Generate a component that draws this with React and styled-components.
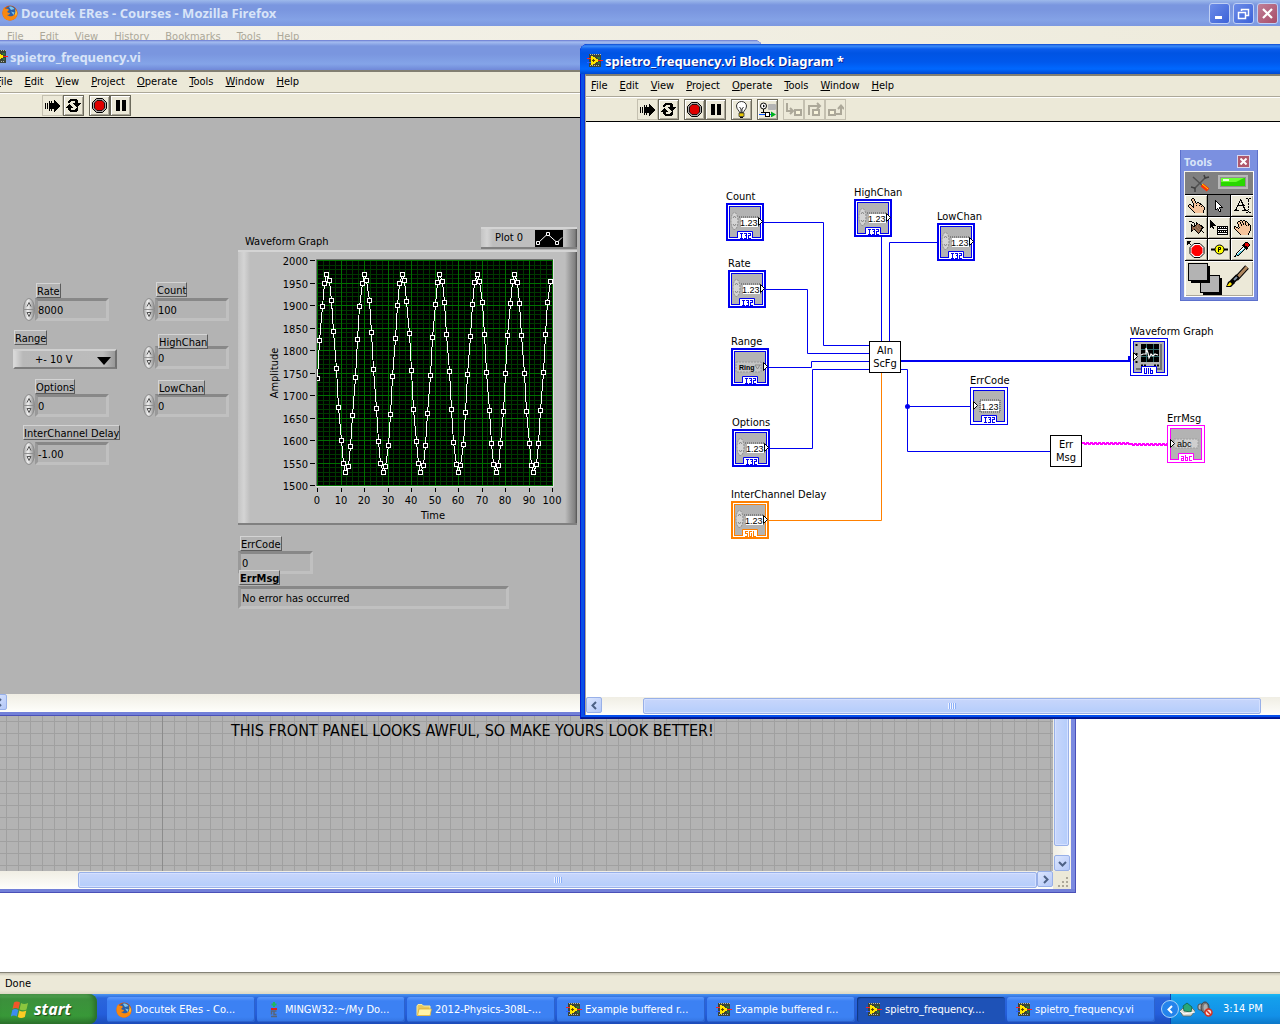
import React from "react";
import styled, { createGlobalStyle, css } from "styled-components";

const ui = '"DejaVu Sans Condensed", "Noto Sans", "Open Sans", sans-serif';
const caption = '"Noto Sans", "Open Sans", sans-serif';

const GlobalStyle = createGlobalStyle`
  * { box-sizing: border-box; }
  html, body { margin: 0; height: 100%; overflow: hidden; }
  body { font-family: ${ui}; font-size: 11px; line-height: 14px; color: #000; background: #fff; }
  button, input, select { font: inherit; color: inherit; margin: 0; padding: 0; border: 0; background: none; border-radius: 0; }
  svg { display: block; flex: none; }
`;

/* ---------- icons ---------- */

const inks = {
  "#": "#000", w: "#fff", s: "#f6c49c", g: "#808080", b: "#8a6048", y: "#ffff00",
  r: "#e00000", c: "#58c8d8", o: "#ff8000", d: "#555", k: "#a08060", l: "#c8c8c8",
};

function Pixels({ rows, ink }) {
  const cells = [];
  rows.forEach((row, y) => {
    let x = 0;
    while (x < row.length) {
      const ch = row[x];
      let n = 1;
      while (row[x + n] === ch) n += 1;
      if (ch !== ".") cells.push(<rect key={`${x}-${y}`} x={x} y={y} width={n} height="1" fill={ink || inks[ch]} />);
      x += n;
    }
  });
  return (
    <svg width={rows[0].length} height={rows.length} shapeRendering="crispEdges" aria-hidden="true">
      {cells}
    </svg>
  );
}

const runRows = [
  ".........#.....",
  "....#.#..##....",
  "....#.#..###...",
  "#.#.#########..",
  "#.#.##########.",
  "#.#.###########",
  "#.#.###########",
  "#.#.##########.",
  "#.#.#########..",
  "....#.#..###...",
  "....#.#..##....",
  ".........#.....",
];
const loopRows = [
  "....#######....",
  "...#########...",
  "..###....###...",
  "..##.....###...",
  ".......########",
  "...#....######.",
  "..###....####..",
  ".#####....##...",
  "#######....#...",
  "..###.....##...",
  "..###....###...",
  "...#########...",
  "....#######....",
];
const pointRows = [
  "....##...........",
  "...#ss#..........",
  "...#ss#..........",
  "....#ss#.........",
  "....#ss#.##......",
  ".....#ss#ss##....",
  ".##..#ssssss##...",
  "#ss#.#ss#ss#ss#..",
  "#sss##sssssss#s#.",
  ".#sss#ssssssssss#",
  "..#sssssssssssss#",
  "...#ssssssssssss#",
  "....#ssssssssss#.",
  ".....#sssssssss#.",
  "......#ssssssss#.",
];
const cursorRows = [
  "#.......",
  "##......",
  "#w#.....",
  "#ww#....",
  "#www#...",
  "#wwww#..",
  "#wwwww#.",
  "#www####",
  "#w#w#...",
  "##.#w#..",
  "...#w#..",
  "....##..",
];
const textRows = [
  "............##.##",
  "......#.......#..",
  "......##......#..",
  ".....#.#......#..",
  ".....#.##........",
  "....#...#.....#..",
  "....#...##....#..",
  "...########......",
  "...#.....#....#..",
  "..#......##...#..",
  "..#.......#......",
  ".##.......##..#..",
  "#####...######...",
  "..............#..",
  "............##.##",
];
const spoolRows = [
  "###............",
  "...##..#.......",
  ".....#.##......",
  "..#..#.#bb#....",
  "..##.##bkbb##..",
  "..#b##bbkbbb##.",
  "..#bbkbbkbbkb##",
  "..#bbbkbbkbb##.",
  "..#bb#bkbbkb#..",
  "..##..#bkbb##..",
  "..#....#bkb#.#.",
  "........#b#...#",
  ".........#.....",
];
const menuRows = [
  "#.................",
  "##................",
  "###...............",
  "####..............",
  "#####.............",
  "######............",
  "###....###########",
  "#.##...#w#w#w#w#w#",
  "...#...###########",
  ".......#wwwwwwwww#",
  ".......###########",
  ".......#w#w#w#w#w#",
  ".......###########",
  ".......#wwwwwwwww#",
  ".......###########",
];
const palmRows = [
  "......##.##......",
  "....##ss#ss##....",
  "...#ss#s#ss#s#...",
  "...#ss#ss#s#ss#..",
  "....#ss#s#s#ss##.",
  "....#ss#ssss#s#s#",
  "##..#sssssssssss#",
  "#s##.#ssssssssss#",
  "#sss#sssssssssss#",
  ".#ssssssssssssss#",
  "..#sssssssssssss#",
  "...#sssssssssss#.",
  "....#ssssssssss#.",
  ".....#ssssssss#..",
  "......#sssssss#..",
];
const dropperRows = [
  "...........###..",
  "..........#rrr#.",
  ".........##rrrr#",
  "........###rrrr#",
  ".........####r#.",
  "........#w####..",
  ".......#wwc###..",
  "......#wwc#.#...",
  ".....#wwc#......",
  "....#wcc#.......",
  "...#wcc#........",
  "..#wcc#.........",
  "..#cc#..........",
  ".#c##...........",
  "##..............",
];

const RunIcon = () => <Pixels rows={runRows} />;
const LoopIcon = () => <Pixels rows={loopRows} />;
const AbortIcon = () => (
  <svg width="15" height="15" viewBox="0 0 15 15" aria-hidden="true">
    <path d="M4.500.5h6l4 4v6l-4 4h-6l-4-4v-6z" fill="#a8a8a8" stroke="#000" />
    <path d="M5 2.500h5L12.500 5v5L10 12.500H5L2.500 10V5z" fill="#e00000" stroke="#000" strokeWidth=".8" />
  </svg>
);
const PauseIcon = () => (
  <svg width="15" height="15" shapeRendering="crispEdges" aria-hidden="true">
    <path d="M3 2h4v11H3zM9 2h4v11H9z" fill="#000" />
  </svg>
);
const BulbIcon = () => (
  <svg width="15" height="17" viewBox="0 0 15 17" aria-hidden="true">
    <path d="M5.500 11.500c0-2-3-3-3-6.500a5 4.500 0 0 1 10 0c0 3.500-3 4.500-3 6.500z" fill="#fff" stroke="#333" />
    <path d="M5.500 6l1.500 2v3M9.500 6L8 8v3" stroke="#000" fill="none" strokeWidth=".8" />
    <path d="M5 12h5v3.500H5z" fill="#e8c800" stroke="#333" strokeWidth=".8" />
    <path d="M6 16.500h3" stroke="#000" />
  </svg>
);
const RetainIcon = () => (
  <svg width="17" height="15" viewBox="0 0 17 15" aria-hidden="true">
    <circle cx="4.500" cy="4" r="3" fill="#fff" stroke="#000" />
    <path d="M4 2.500v3l2-1.500z" />
    <path d="M4.500 7v3.500M2 10.500h5" stroke="#000" />
    <rect x="9" y="2" width="8" height="6" rx="1" fill="#b4b4b4" />
    <path d="M0 12.500h13" stroke="#0050ff" />
    <rect x="6.500" y="10.500" width="4" height="4" fill="#fff" stroke="#000" />
    <path d="M12 9.500l5 3-5 3z" fill="#00b020" />
  </svg>
);
const stepPaths = {
  into: "M2 1v8h6M5 6l3 3-3 3",
  over: "M3 13V4h11M11 1l3 3-3 3",
  out: "M9 12h5V4M11 7l3-3.500L17 7",
};
const stepBox = { into: 10, over: 7, out: 2 };
const StepIcon = ({ kind }) => (
  <svg width="17" height="15" viewBox="0 0 17 15" aria-hidden="true">
    <path d={stepPaths[kind]} fill="none" stroke="#aca899" strokeWidth="2" />
    <rect x={stepBox[kind]} y="8" width="6" height="5" fill="#f8f4dc" stroke="#aca899" strokeWidth="2" />
  </svg>
);
const ViIcon = () => (
  <svg width="16" height="16" viewBox="0 0 16 16" shapeRendering="crispEdges" aria-hidden="true">
    <path d="M2 1h12v13H2z" fill="#3c4438" />
    <path d="M3 1h1v1H3zM5 1h1v1H5zM7 1h1v1H7zM9 1h1v1H9zM11 1h1v1h-1zM13 1h1v1h-1zM3 12h1v1H3zM5 12h1v1H5zM7 12h1v1H7zM9 12h1v1H9zM11 12h1v1h-1z" fill="#b8b8a8" />
    <path d="M10 4h3v2h-2zM11 9h2v2h-2z" fill="#2a7a40" />
    <path d="M0 5h4v1H0z" fill="#ff2020" />
    <path d="M0 9h4v1H0z" fill="#3060ff" />
    <path d="M11 7h5v1h-5z" fill="#ff2020" />
    <path d="M4 3h2v1h2v1h1v1h2v3H9v1H8v1H6v1H4z" fill="#ffe600" />
    <path d="M6 6h1v1h1v1H7v1H6V8H5V7h1z" fill="#604000" />
  </svg>
);
const FoxIcon = () => (
  <svg width="16" height="16" viewBox="0 0 16 16" aria-hidden="true">
    <circle cx="8" cy="8" r="7.600" fill="#d8580c" />
    <circle cx="8.500" cy="6.500" r="5.500" fill="#2a5fa8" />
    <path d="M7 2c2-1 4 0 5.500 2l-3.500 1zM9 6.500l3.500 1-1 2.500z" fill="#7cc4ec" />
    <path d="M.6 6C1 4 2 2.500 2.500 2c0 1 .3 1.500 1 2 1.500-.5 2.800 0 3.500 1L5.200 6.800c.3 1 1.500 1 2.800 1.200-.5 2-2 2-3 1.800C7 12 11 12 13.200 8.500c.8-1.500.3-3.500-.2-4.500 2.500 2 3 5.500 1.500 8C12 16.500 4 16.800 1.500 12 .5 10 .3 8 .6 6z" fill="#f88810" />
    <path d="M13.200 8.500c.5-1 .6-3 0-4.500 1.800 2 2 5 .6 7z" fill="#ffd83c" />
  </svg>
);
const FlagIcon = () => (
  <svg width="19" height="19" viewBox="0 0 19 19" aria-hidden="true">
    <path d="M3 2.500c2-1.500 4-1.200 6 0L7.500 9c-2-1.200-4-1.300-6 0z" fill="#f0562a" />
    <path d="M10 3c2 1.200 4.500 1.200 7 0l-1.500 6.500c-2.500 1.200-5 1-7 0z" fill="#8cc63e" />
    <path d="M1.300 10c2-1.300 4-1.200 6 0l-1.500 6.500c-2-1.200-4-1.200-6 0z" fill="#3d8cf0" />
    <path d="M8.300 10.500c2 1.200 4.500 1.200 7 0L13.800 17c-2.500 1.200-5 1.200-7 0z" fill="#fccc24" />
  </svg>
);
const FolderIcon = () => (
  <svg width="16" height="16" viewBox="0 0 16 16" aria-hidden="true">
    <path d="M1 4l1-1.500h4L7.500 4H14v9.500H1z" fill="#e8c860" stroke="#f8eca0" />
    <path d="M3 7h12.500L14 13.500H1.500z" fill="#fff4a8" stroke="#d8a828" strokeWidth=".7" />
  </svg>
);
const GitIcon = () => (
  <svg width="16" height="16" viewBox="0 0 16 16" aria-hidden="true">
    <path d="M8 0v5M5.500 2.500h5" stroke="#20b860" strokeWidth="2" />
    <path d="M5 7h6" stroke="#e02020" strokeWidth="2" />
    <path d="M10.500 9h-5v3.500M8 9v3.500h2.500M5 14.500h6" stroke="#586478" strokeWidth="1.500" fill="none" />
  </svg>
);
const DriveIcon = () => (
  <svg width="17" height="17" viewBox="0 0 17 17" aria-hidden="true">
    <path d="M2 10l3-3h9l3 3-4 5H5z" fill="#d8d8d0" stroke="#606860" strokeWidth=".8" />
    <path d="M5 5l4-3 5 4-1 5-7-1z" fill="#28a878" stroke="#106048" strokeWidth=".8" />
    <path d="M2 10l4 3 11-2" fill="none" stroke="#fff" />
  </svg>
);
const MuteIcon = () => (
  <svg width="16" height="16" viewBox="0 0 16 16" aria-hidden="true">
    <rect x="1" y="3" width="5" height="6" rx="2" fill="#b8b8b8" stroke="#505050" />
    <ellipse cx="8" cy="6.500" rx="4" ry="5.500" fill="#787878" stroke="#404040" />
    <ellipse cx="8.500" cy="6.500" rx="2" ry="3.500" fill="#b0b0b0" />
    <circle cx="11.500" cy="11.500" r="3.500" fill="#f4dcd8" stroke="#d83020" strokeWidth="1.500" />
    <path d="M9 9l5 5" stroke="#d83020" strokeWidth="1.500" />
  </svg>
);
const Chevron = ({ turn, color = "#4d6185" }) => (
  <svg width="9" height="9" viewBox="0 0 9 9" aria-hidden="true">
    <path d="M3 1l3.500 3.500L3 8" fill="none" stroke={color} strokeWidth="2" transform={`rotate(${turn} 4.500 4.500)`} />
  </svg>
);

/* ---------- desktop and browser ---------- */

const Desktop = styled.div`
  position: relative;
  display: flex;
  flex-direction: column;
  height: 100vh;
  overflow: hidden;
`;
const Browser = styled.main`
  flex: 1;
  min-height: 0;
  display: flex;
  flex-direction: column;
  background: #fff;
`;
const BrowserTitle = styled.header`
  height: 26px;
  flex: none;
  display: flex;
  align-items: center;
  gap: 3px;
  padding: 0 2px;
  background: linear-gradient(#9db9eb 0, #7a96df 5px, #7a96df 10px, #84a2e6 20px, #7c98e0 100%);
`;
const CaptionText = styled.h1`
  flex: 1;
  margin: 0;
  font: bold 13px/18px ${caption};
  white-space: nowrap;
  color: ${(p) => (p.$active ? "#fff" : "#d8e4f8")};
  text-shadow: ${(p) => (p.$active ? "1px 1px 0 #0f1f88" : "none")};
`;
const CaptionButton = styled.button`
  width: 21px;
  height: 21px;
  display: grid;
  place-items: center;
  border: 1px solid #c0d0f4;
  border-radius: 3px;
  background: ${(p) => (p.$close ? "linear-gradient(135deg,#c08098,#a84c68)" : "linear-gradient(135deg,#6c8ce8,#3c62d8)")};
`;
const BrowserMenu = styled.nav`
  display: flex;
  gap: 16px;
  height: 22px;
  padding: 3px 7px;
  background: linear-gradient(90deg, #f4f2ea, #eeebdc);
  button { color: #aca899; }
`;
const Page = styled.div` flex: 1; `;
const StatusBar = styled.footer`
  height: 22px;
  flex: none;
  padding: 4px 5px;
  border-top: 1px solid #848276;
  background: linear-gradient(#c8c4b4 0, #ece9d8 3px, #ece9d8 17px, #dcd8c4 100%);
`;

/* ---------- LabVIEW windows ---------- */

const Frame = styled.section`
  position: absolute;
  display: flex;
  flex-direction: column;
  padding: 0 5px 4px;
  border-radius: 8px 8px 0 0;
  overflow: hidden;
  ${(p) =>
    p.$active
      ? css`
          background: #0831d9;
          box-shadow: inset 1px 0 #0019cf, inset 0 -1px #00138c, inset 0 -2px #001ea0, inset 4px 0 #0a50e8, inset -4px 0 #0a50e8, inset 0 -4px #0450ee;
        `
      : css`
          background: #7b8ae0;
          box-shadow: inset 0 -1px #4a50b8, inset -1px 0 #4a50b8, inset 0 -4px #7280d8;
        `}
`;
const PanelFrame = styled(Frame)` left: -15px; top: 40px; width: 777px; height: 676px; `;
const DiagramFrame = styled(Frame)` left: 580px; right: -20px; top: 44px; height: 675px; `;
const ExampleFrame = styled(Frame)` left: -15px; top: 600px; width: 1091px; height: 293px; `;

const TitleBar = styled.header`
  height: 30px;
  flex: none;
  margin: 0 -5px;
  padding: 4px 7px 0;
  display: flex;
  align-items: center;
  gap: 2px;
  background: ${(p) =>
    p.$active
      ? "linear-gradient(#0a48d0 0, #3c8cf8 2px, #0a5cec 5px, #0054e3 9px, #0058ec 18px, #0068ff 25px, #0048d0 100%)"
      : "linear-gradient(#6878d0 0, #a4bcf0 2px, #7a96df 6px, #7a96df 14px, #84a4e8 24px, #7088d8 100%)"};
`;
const Body = styled.div`
  flex: 1;
  min-height: 0;
  display: flex;
  flex-direction: column;
  border-left: 1px solid #aca899;
  border-top: 2px solid #827f72;
  background: #ece9d8;
`;
const MenuBar = styled.nav`
  height: 21px;
  flex: none;
  display: flex;
  align-items: center;
  gap: 12px;
  padding: 0 5px;
  border-bottom: 1px solid #aca899;
`;
const MenuItem = styled.button` white-space: nowrap; `;
const ToolBar = styled.div`
  height: 25px;
  flex: none;
  display: flex;
  gap: 5px;
  padding: 1px 51px 0;
  border-top: 1px solid #fff;
  border-bottom: 1px solid #000;
`;
const ToolGroup = styled.div` display: flex; `;
const ToolButton = styled.button`
  width: 21px;
  height: 21px;
  display: grid;
  place-items: center;
  border: 1px solid ${(p) => (p.$flat ? "#c4c0b0" : "#6c6a5c")};
  box-shadow: ${(p) => (p.$flat ? "none" : "inset 1px 1px #fff, inset -1px -1px #aca899")};
`;

const Track = styled.div`
  flex: none;
  display: flex;
  flex-direction: ${(p) => (p.$vertical ? "column" : "row")};
  ${(p) => (p.$vertical ? "width: 17px; background: linear-gradient(90deg,#f0eee4,#fefefb);" : "height: 18px; background: linear-gradient(#f0eee4,#fefefb);")}
`;
const ArrowButton = styled.button`
  width: 16px;
  height: 16px;
  margin: ${(p) => (p.$vertical ? "0 1px" : "0")};
  flex: none;
  display: grid;
  place-items: center;
  border: 1px solid #98b0e8;
  border-radius: 2px;
  background: linear-gradient(135deg, #dce6fe, #b4c8f8);
`;
const Thumb = styled.div`
  flex: ${(p) => (p.$grow ? 1 : "none")};
  margin: ${(p) => (p.$vertical ? "0 1px" : "1px 0")};
  display: grid;
  place-items: center;
  border: 1px solid #98b0e8;
  border-radius: 2px;
  box-shadow: inset 0 0 0 1px #d4e0ff;
  background: ${(p) => (p.$vertical ? "linear-gradient(90deg,#c8d6fb,#b4cdfb)" : "linear-gradient(#c8d6fb,#b4cdfb)")};
`;
const Space = styled.div` flex: none; ${(p) => (p.$vertical ? `height: ${p.$size}px;` : `width: ${p.$size}px;`)} `;
const Grip = () => (
  <svg width="8" height="6" shapeRendering="crispEdges" aria-hidden="true">
    <path d="M0 0h1v6H0zM2 0h1v6H2zM4 0h1v6H4zM6 0h1v6H6z" fill="#f0f4ff" />
    <path d="M1 0h1v6H1zM3 0h1v6H3zM5 0h1v6H5zM7 0h1v6H7z" fill="#8cb0f8" />
  </svg>
);

const menus = ["File", "Edit", "View", "Project", "Operate", "Tools", "Window", "Help"];
function Menus() {
  return (
    <MenuBar>
      {menus.map((m) => (
        <MenuItem key={m}><u>{m[0]}</u>{m.slice(1)}</MenuItem>
      ))}
    </MenuBar>
  );
}
function RunTools() {
  return (
    <>
      <ToolGroup>
        <ToolButton $flat aria-label="Run"><RunIcon /></ToolButton>
        <ToolButton aria-label="Run continuously"><LoopIcon /></ToolButton>
      </ToolGroup>
      <ToolGroup>
        <ToolButton aria-label="Abort"><AbortIcon /></ToolButton>
        <ToolButton aria-label="Pause"><PauseIcon /></ToolButton>
      </ToolGroup>
    </>
  );
}

/* ---------- front panel ---------- */

const Canvas = styled.div`
  position: relative;
  flex: 1;
  min-height: 0;
  overflow: hidden;
  background: ${(p) => (p.$white ? "#fff" : "#b3b3b3")};
`;
const placed = css` position: absolute; left: ${(p) => p.$x}px; top: ${(p) => p.$y}px; `;

const Tag = styled.label`
  ${placed}
  height: 15px;
  line-height: 15px;
  white-space: nowrap;
  border: 1px solid;
  border-color: #d4d4d4 #5c5c5c #5c5c5c #d4d4d4;
  background: #b3b3b3;
  z-index: 1;
  font-weight: ${(p) => (p.$bold ? "bold" : "normal")};
`;
const Numeric = styled.div` ${placed} display: flex; align-items: stretch; height: 23px; `;
const well = css`
  border: 3px solid;
  border-color: #888 #c0c0c0 #c0c0c0 #999;
  background: #b3b3b3;
`;
const Field = styled.input` ${well} width: 74px; padding-top: 2px; `;
const Readout = styled.output` ${placed} ${well} width: ${(p) => p.$w}px; height: 23px; line-height: 19px; white-space: nowrap; padding-left: 1px; `;

const Spinner = () => (
  <svg width="12" height="23" viewBox="0 0 12 23" aria-hidden="true">
    <defs>
      <linearGradient id="knob">
        <stop offset="0" stopColor="#a0a0a0" /><stop offset=".4" stopColor="#f0f0f0" /><stop offset="1" stopColor="#888" />
      </linearGradient>
    </defs>
    <ellipse cx="6" cy="11.500" rx="5.500" ry="11" fill="url(#knob)" stroke="#8c8c8c" />
    <path d="M1 11.500h10" stroke="#909090" />
    <path d="M4 8.500L6 4.500l2 4M4 14.500l2 4 2-4z" fill="none" stroke="#555" />
  </svg>
);

const RingBox = styled.div`
  ${placed}
  width: 104px;
  height: 20px;
  border: 2px solid;
  border-color: #d0d0d0 #707070 #7c7c7c #d8d8d8;
  background: linear-gradient(90deg, #d8d8d8, #b8b8b8 8px, #bcbcbc 88px, #989898);
  svg { position: absolute; right: 4px; top: 6px; pointer-events: none; }
`;
const Ring = styled.select` appearance: none; width: 100%; height: 17px; padding-left: 20px; `;

const controls = [
  { id: "rate", label: "Rate", lx: 45, ly: 165, x: 32, y: 180, value: "8000" },
  { id: "count", label: "Count", lx: 165, ly: 164, x: 152, y: 180, value: "100" },
  { id: "high", label: "HighChan", lx: 167, ly: 216, x: 152, y: 228, value: "0" },
  { id: "options", label: "Options", lx: 44, ly: 261, x: 32, y: 276, value: "0" },
  { id: "low", label: "LowChan", lx: 167, ly: 262, x: 152, y: 276, value: "0" },
  { id: "delay", label: "InterChannel Delay", lx: 32, ly: 307, x: 32, y: 324, value: "-1.00" },
];

const metal = css`
  border-top: 2px solid #d4d4d4;
  border-bottom: 2px solid #808080;
  background:
    linear-gradient(90deg, #c4c4c4, #d4d4d4 6px, #bebebe 12px) left / 12px 100% no-repeat,
    linear-gradient(90deg, #bebebe, #969696 6px, #808080 10px, #505050 12px) right / 12px 100% no-repeat,
    #bebebe;
`;
const GraphFrame = styled.figure`
  ${placed}
  ${metal}
  margin: 0;
  width: 339px;
  height: 275px;
  svg { position: absolute; left: 0; top: -2px; }
`;
const Legend = styled.div`
  ${placed}
  ${metal}
  width: 96px;
  height: 22px;
  display: flex;
  align-items: center;
  gap: 12px;
  padding-left: 14px;
`;
const PlainText = styled.span` ${placed} white-space: nowrap; ${(p) => p.$large && "font-size: 16px; line-height: 18px;"} `;

const samples = Array.from({ length: 100 }, (_, n) => 1749 + 220 * Math.sin((2 * Math.PI * n) / 16 - 0.05 + 0.0006 * n));
const px = (n) => 79 + Math.round(n * 2.35);
const py = (v) => 10 + Math.round((2000 - v) * 0.45);

function WaveformChart() {
  const grid = [];
  for (let i = 0; i <= 40; i += 1) grid.push({ k: `x${i}`, d: `M${px(i * 2.5)}.5 10v226`, major: i % 4 === 0 });
  for (let i = 0; i <= 50; i += 1) grid.push({ k: `y${i}`, d: `M79 ${py(1500 + i * 10)}.5h236`, major: i % 5 === 0 });
  grid.sort((a, b) => a.major - b.major);
  return (
    <svg width="339" height="275" role="img" aria-label="Waveform Graph" fontFamily={ui} fontSize="11">
      <path d="M78.500 237V9.500H315" fill="none" stroke="#707070" />
      <path d="M78 236.500h237.500V9" fill="none" stroke="#e0e0e0" />
      <rect x="79" y="10" width="236" height="226" fill="#000" />
      <g shapeRendering="crispEdges">
        {grid.map((g) => <path key={g.k} d={g.d} stroke={g.major ? "#007000" : "#003800"} />)}
      </g>
      {Array.from({ length: 11 }, (_, i) => {
        const v = 1500 + i * 50;
        return (
          <g key={v}>
            <path d={`M72 ${py(v)}.5h5`} stroke="#000" />
            <text x="70" y={py(v) + 5} textAnchor="end">{v}</text>
          </g>
        );
      })}
      {Array.from({ length: 11 }, (_, i) => (
        <g key={i}>
          <path d={`M${px(i * 10)}.5 238v4`} stroke="#000" />
          <text x={px(i * 10)} y="254" textAnchor="middle">{i * 10}</text>
        </g>
      ))}
      <text x="195" y="269" textAnchor="middle">Time</text>
      <text transform="translate(40 123) rotate(-90)" textAnchor="middle">Amplitude</text>
      <svg x="79" y="10" width="236" height="226" viewBox="79 10 236 226" shapeRendering="crispEdges">
        <polyline points={samples.map((v, n) => `${px(n) + 0.5},${py(v) + 0.5}`).join(" ")} fill="none" stroke="#fff" />
        {samples.map((v, n) => <rect key={n} x={px(n) - 1.5} y={py(v) - 1.5} width="4" height="4" fill="#000" stroke="#fff" />)}
      </svg>
    </svg>
  );
}

function FrontPanel() {
  return (
    <PanelFrame>
      <TitleBar><ViIcon /><CaptionText as="h2">spietro_frequency.vi</CaptionText></TitleBar>
      <Body>
        <Menus />
        <ToolBar><RunTools /></ToolBar>
        <Canvas>
          {controls.map((c) => (
            <React.Fragment key={c.id}>
              <Tag htmlFor={c.id} $x={c.lx} $y={c.ly}>{c.label}</Tag>
              <Numeric $x={c.x} $y={c.y}><Spinner /><Field id={c.id} defaultValue={c.value} /></Numeric>
            </React.Fragment>
          ))}
          <Tag htmlFor="range" $x={23} $y={212}>Range</Tag>
          <RingBox $x={22} $y={231}>
            <Ring id="range" defaultValue="10"><option value="10">+- 10 V</option></Ring>
            <svg width="14" height="8" aria-hidden="true"><path d="M0 0h14L7 8z" /></svg>
          </RingBox>
          <PlainText $x={254} $y={117}>Waveform Graph</PlainText>
          <Legend $x={490} $y={109}>
            Plot 0
            <svg width="28" height="17" viewBox="0 0 28 17" aria-hidden="true">
              <rect width="28" height="17" fill="#000" />
              <path d="M3 13L12.500 4 22 12.500l5-5" fill="none" stroke="#fff" />
              <path d="M1.500 11.500h3v3h-3zM11.500 2.500h3v3h-3zM20.500 11.500h3v3h-3z" fill="#000" stroke="#fff" />
            </svg>
          </Legend>
          <GraphFrame $x={247} $y={132}><WaveformChart /></GraphFrame>
          <Tag htmlFor="errcode" $x={249} $y={418}>ErrCode</Tag>
          <Readout id="errcode" $x={247} $y={433} $w={75}>0</Readout>
          <Tag htmlFor="errmsg" $bold $x={248} $y={452}>ErrMsg</Tag>
          <Readout id="errmsg" $x={247} $y={468} $w={271}>No error has occurred</Readout>
        </Canvas>
        <Track><ArrowButton aria-label="Scroll left"><Chevron turn={180} /></ArrowButton></Track>
      </Body>
    </PanelFrame>
  );
}

/* ---------- block diagram ---------- */

const Wires = styled.svg` position: absolute; left: 0; top: 0; `;
const Terminal = styled.div`
  ${placed}
  width: 38px;
  height: 38px;
  padding: ${(p) => (p.$out ? 2 : 1)}px;
  border: ${(p) => (p.$out ? 1 : 2)}px solid ${(p) => p.$color};
  background: #fff;
`;
const TerminalFace = styled.div`
  position: relative;
  width: 32px;
  height: 32px;
  border: 1px solid ${(p) => p.$color};
  background: #b3b3b3;
  > svg { position: absolute; left: -1px; top: -1px; overflow: visible; }
`;
const SubVi = styled.div`
  ${placed}
  width: 32px;
  height: 32px;
  display: grid;
  align-content: center;
  text-align: center;
  line-height: 13px;
  border: 1px solid #000;
  background: #fff;
`;

const BLUE = "#0000f0";
const ORANGE = "#ff8000";
const PINK = "#ff00ff";

const typeRows = {
  I32: ["###.###.###", ".#....#...#", ".#...##.###", ".#....#.#..", ".#....#.#..", "###.###.###"],
  SGL: ["###.###.#..", "#...#...#..", "###.#.#.#..", "..#.#.#.#..", "..#.#.#.#..", "###.###.###"],
  U16: ["#.#.#.#....", "#.#.#.#....", "#.#.#.###..", "#.#.#.#.#..", "#.#.#.#.#..", "###.#.###.."],
  abc: ["....#......", "###.#...###", "..#.###.#..", "###.#.#.#..", "#.#.#.#.#..", "###.###.###"],
};

function Face({ kind, type, color }) {
  const out = kind === "ind" || kind === "str" || kind === "graph";
  return (
    <TerminalFace $color={color}>
      <svg width="32" height="32" viewBox="0 0 32 32" fontFamily='"Liberation Sans", sans-serif' fontSize="9" aria-hidden="true">
        {kind === "num" && (
          <>
            <ellipse cx="5.500" cy="15" rx="3.500" ry="8.500" fill="#d4d4d4" stroke="#8c8c8c" strokeDasharray="2 1" />
            <path d="M4 12l1.500-2L7 12M4 18l1.500 2L7 18" fill="none" stroke="#888" />
            <path d="M10 11h19v10" fill="none" stroke="#808080" strokeWidth="2" strokeDasharray="1 1" />
            <rect x="12" y="12" width="17" height="9" fill="#fff" />
            <text x="11" y="20">1.23</text>
          </>
        )}
        {kind === "ind" && (
          <>
            <rect x="7" y="10" width="20" height="12" fill="none" stroke="#808080" strokeWidth="2" strokeDasharray="1 1" />
            <rect x="8" y="11" width="18" height="10" fill="#fff" />
            <text x="8" y="20">1.23</text>
          </>
        )}
        {kind === "ring" && (
          <>
            <rect x="2" y="11" width="25" height="10" fill="#c4c4c4" stroke="#989898" strokeDasharray="2 1" />
            <text x="5" y="19" fontWeight="bold" fontSize="7">Ring</text>
            <path d="M21 14h5l-2.500 4z" fill="none" stroke="#888" />
          </>
        )}
        {kind === "str" && (
          <>
            <rect x="4" y="11" width="24" height="9" fill="#cfcfcf" stroke="#a0a0a0" strokeDasharray="2 1" />
            <text x="7" y="19">abc</text>
          </>
        )}
        {kind === "graph" && (
          <>
            <path d="M28 3v25H3" fill="none" stroke="#707070" strokeWidth="2" />
            <rect x="8" y="3" width="18" height="18" fill="#000" />
            <path d="M13.500 3v18M20.500 3v18M8 8.500h18M8 15.500h18" stroke="#306868" />
            <path d="M8 14l2-1h3V7l2 5 1 5 2-4 2 2 2-2 3 1" fill="none" stroke="#fff" strokeWidth="1.200" />
            <path d="M3.500 3v3M3.500 12v3M3.500 20v3M8 24.500h5M21 24.500h6" stroke="#000" strokeWidth="2" strokeDasharray="2 1" />
          </>
        )}
        <path d="M9 26h14v7H9z" fill="#fff" />
        <path d="M8.500 32v-6.500h15V32" fill="none" stroke={color} />
        <svg x="11" y="27" width="11" height="6"><Pixels rows={typeRows[type]} ink={color} /></svg>
        <path d={out ? "M.5 11.500v8l4-4z" : "M29.500 11.500v8l4-4z"} fill="#fff" stroke="#000" />
      </svg>
    </TerminalFace>
  );
}

const terminals = [
  { label: "Count", x: 140, y: 81, kind: "num", type: "I32", color: BLUE },
  { label: "HighChan", x: 268, y: 77, kind: "num", type: "I32", color: BLUE },
  { label: "LowChan", x: 351, y: 101, kind: "num", type: "I32", color: BLUE },
  { label: "Rate", x: 142, y: 148, kind: "num", type: "I32", color: BLUE },
  { label: "Range", x: 145, y: 226, kind: "ring", type: "I32", color: BLUE },
  { label: "Options", x: 146, y: 307, kind: "num", type: "I32", color: BLUE },
  { label: "InterChannel Delay", x: 145, y: 379, kind: "num", type: "SGL", color: ORANGE },
  { label: "ErrCode", x: 384, y: 265, kind: "ind", type: "I32", color: BLUE, out: true },
  { label: "Waveform Graph", x: 544, y: 216, kind: "graph", type: "U16", color: BLUE, out: true },
  { label: "ErrMsg", x: 581, y: 303, kind: "str", type: "abc", color: PINK, out: true },
];

const ripple = (x0, x1, y) => {
  let d = "";
  for (let x = x0; x < x1; x += 4) d += `M${x} ${y}h2v1h2v1h-2v-1h-2z`;
  return d;
};

function BlockDiagram() {
  return (
    <DiagramFrame $active>
      <TitleBar $active><ViIcon /><CaptionText as="h2" $active>spietro_frequency.vi Block Diagram *</CaptionText></TitleBar>
      <Body>
        <Menus />
        <ToolBar>
          <RunTools />
          <ToolButton aria-label="Highlight execution"><BulbIcon /></ToolButton>
          <ToolButton aria-label="Retain wire values"><RetainIcon /></ToolButton>
          <ToolGroup>
            <ToolButton $flat aria-label="Step into"><StepIcon kind="into" /></ToolButton>
            <ToolButton $flat aria-label="Step over"><StepIcon kind="over" /></ToolButton>
            <ToolButton $flat aria-label="Step out"><StepIcon kind="out" /></ToolButton>
          </ToolGroup>
        </ToolBar>
        <Canvas $white>
          <Wires width="640" height="420" fill="none" aria-hidden="true">
            <g stroke={BLUE}>
              <path d="M178 100.500h59.500v123H283" />
              <path d="M180 167.500h41.500v64H283" />
              <path d="M182 245.500h43.500v-6H283" />
              <path d="M184 326.500h42.500v-79H283" />
              <path d="M295.500 115v104" />
              <path d="M351 120.500h-47.500V219" />
              <path d="M315 247.500h6.500v82H464" />
              <path d="M321 284.500h63" />
              <path d="M315 239h228v-4h5" strokeWidth="2" />
            </g>
            <circle cx="321.500" cy="284.500" r="2.500" fill={BLUE} />
            <path d="M183 398.500h112.500V251" stroke={ORANGE} />
            <path d={ripple(496, 544, 320) + ripple(544, 582, 321)} stroke={PINK} fill={PINK} shapeRendering="crispEdges" />
          </Wires>
          {terminals.map((t) => (
            <React.Fragment key={t.label}>
              <PlainText $x={t.x} $y={t.y - 13}>{t.label}</PlainText>
              <Terminal $x={t.x} $y={t.y} $color={t.color} $out={t.out}>
                <Face kind={t.kind} type={t.type} color={t.color} />
              </Terminal>
            </React.Fragment>
          ))}
          <SubVi $x={283} $y={219}><span>AIn</span><span>ScFg</span></SubVi>
          <SubVi $x={464} $y={313}><span>Err</span><span>Msg</span></SubVi>
        </Canvas>
        <Track>
          <ArrowButton aria-label="Scroll left"><Chevron turn={180} /></ArrowButton>
          <Space $size={41} />
          <Thumb $grow><Grip /></Thumb>
          <Space $size={34} />
        </Track>
      </Body>
    </DiagramFrame>
  );
}

/* ---------- tools palette ---------- */

const Palette = styled.aside`
  position: absolute;
  left: 1180px;
  top: 150px;
  width: 78px;
  padding: 0 3px 3px;
  border: 1px solid #5c70cc;
  border-width: 0 1px 1px;
  background: #7b90e0;
`;
const PaletteTitle = styled.header`
  height: 21px;
  display: flex;
  align-items: center;
  justify-content: space-between;
  color: #d8e4f8;
  font: bold 11px/14px ${caption};
  padding: 2px 4px 0 0;
`;
const PaletteClose = styled.button`
  width: 13px;
  height: 13px;
  display: grid;
  place-items: center;
  border: 1px solid #d8d8f0;
  background: #b0586c;
`;
const PaletteGrid = styled.div`
  display: grid;
  grid-template-columns: repeat(3, 1fr);
  grid-template-rows: 22px 21px 21px 21px 35px;
  gap: 1px;
  border: 1px solid;
  border-color: #f4f2ea #fff #fff #f4f2ea;
  background: #000;
`;
const ToolCell = styled.button`
  display: grid;
  place-items: center;
  overflow: hidden;
  background: ${(p) => (p.$down ? "#808080" : "#ece9d8")};
  box-shadow: ${(p) => (p.$down ? "none" : "inset 1px 1px #fff, inset -1px -1px #aca899")};
  grid-column: ${(p) => (p.$wide ? "1 / -1" : "auto")};
`;

function ToolsPalette() {
  return (
    <Palette aria-label="Tools">
      <PaletteTitle>
        Tools
        <PaletteClose aria-label="Close tools">
          <svg width="7" height="7" aria-hidden="true"><path d="M.5.5l6 6M6.500.5l-6 6" stroke="#fff" strokeWidth="2" /></svg>
        </PaletteClose>
      </PaletteTitle>
      <PaletteGrid>
        <ToolCell $wide $down aria-label="Automatic tool selection">
          <svg width="64" height="20" aria-hidden="true">
            <path d="M6 4l11 10M19 4L7 16" stroke="#505050" strokeWidth="1.500" />
            <path d="M17 2l1 3 4-1M4 14l4 1v4" stroke="#404040" strokeWidth="1.500" fill="none" />
            <path d="M15 12l6 5" stroke="#ff3000" strokeWidth="4" />
            <path d="M15 11l6 5" stroke="#ffe000" />
            <rect x="32" y="3" width="28" height="12" fill="#909090" stroke="#b8b8b8" strokeWidth="2" />
            <rect x="34" y="5" width="24" height="8" fill="#28d800" />
            <path d="M34 5h23l-8 4H34z" fill="#68ff30" />
            <path d="M36 7h6" stroke="#e8ffe0" strokeWidth="2" />
          </svg>
        </ToolCell>
        <ToolCell aria-label="Operate value"><Pixels rows={pointRows} /></ToolCell>
        <ToolCell $down aria-label="Position"><Pixels rows={cursorRows} /></ToolCell>
        <ToolCell aria-label="Edit text"><Pixels rows={textRows} /></ToolCell>
        <ToolCell aria-label="Connect wire"><Pixels rows={spoolRows} /></ToolCell>
        <ToolCell aria-label="Object shortcut menu"><Pixels rows={menuRows} /></ToolCell>
        <ToolCell aria-label="Scroll window"><Pixels rows={palmRows} /></ToolCell>
        <ToolCell aria-label="Set breakpoint">
          <svg width="18" height="17" aria-hidden="true">
            <path d="M7 2.500h6l4 4v6l-4 4H7l-4-4v-6z" fill="#fff" stroke="#000" />
            <path d="M8 4h4.500l3 3v5l-3 3H8l-3.500-3V7z" fill="#ff0000" />
            <path d="M0 0h4L0 4zM0 0l4 4" stroke="#000" />
          </svg>
        </ToolCell>
        <ToolCell aria-label="Probe data">
          <svg width="17" height="11" aria-hidden="true">
            <path d="M0 5.500h17" stroke="#000" strokeWidth="2" />
            <circle cx="8.500" cy="5.500" r="4.500" fill="#ffff00" stroke="#000" />
            <path d="M7.500 8V3.500h2v2h-2" fill="none" stroke="#000" />
          </svg>
        </ToolCell>
        <ToolCell aria-label="Get color"><Pixels rows={dropperRows} /></ToolCell>
        <ToolCell $wide aria-label="Set color">
          <svg width="64" height="32" aria-hidden="true">
            <path d="M16 15h19v17H16z" fill="#000" />
            <rect x="13.500" y="12.500" width="19" height="17" fill="#b3b3b3" stroke="#000" />
            <path d="M4 3h19v17H4z" fill="#000" />
            <rect x="1.500" y=".5" width="19" height="17" fill="#b3b3b3" stroke="#000" />
            <path d="M60 4L49 16" stroke="#000" strokeWidth="5" />
            <path d="M60 4L50 15" stroke="#b08860" strokeWidth="3" />
            <path d="M51 13l-6 6" stroke="#000" strokeWidth="5" />
            <path d="M50 14l-3 3" stroke="#8090a0" strokeWidth="2" />
            <path d="M44 17l4 3-4 4h-5l2-5z" fill="#000" />
            <path d="M43 19l2 2-2 2h-3z" fill="#ffe800" />
          </svg>
        </ToolCell>
      </PaletteGrid>
    </Palette>
  );
}

/* ---------- example window ---------- */

const GridCanvas = styled.div`
  flex: 1;
  position: relative;
  background:
    linear-gradient(#8c8c8c, #8c8c8c) 171px 0 / 1px 100% no-repeat,
    linear-gradient(90deg, #a0a0a0 1px, transparent 1px) 3px 0 / 12px 12px,
    linear-gradient(#a0a0a0 1px, transparent 1px) 0 1px / 12px 12px,
    #b3b3b3;
`;
const Row = styled.div` display: flex; min-height: 0; flex: ${(p) => (p.$grow ? 1 : "none")}; `;
const HBar = styled(Track)` flex: 1; `;
const Corner = styled.div` width: 17px; display: grid; place-items: end; padding: 1px; `;
const ExampleBody = styled(Body)` border-top: 0; border-right: 1px solid #f4f2ea; `;

function ExampleWindow() {
  return (
    <ExampleFrame>
      <ExampleBody>
        <Row $grow>
          <GridCanvas><PlainText $large $x={240} $y={122}>THIS FRONT PANEL LOOKS AWFUL, SO MAKE YOURS LOOK BETTER!</PlainText></GridCanvas>
          <Track $vertical>
            <Thumb $grow $vertical />
            <Space $vertical $size={9} />
            <ArrowButton $vertical aria-label="Scroll down"><Chevron turn={90} /></ArrowButton>
          </Track>
        </Row>
        <Row>
          <HBar>
            <Space $size={87} />
            <Thumb $grow><Grip /></Thumb>
            <ArrowButton aria-label="Scroll right"><Chevron turn={0} /></ArrowButton>
          </HBar>
          <Corner>
            <svg width="12" height="12" shapeRendering="crispEdges" aria-hidden="true">
              <path d="M9 1h2v2H9zM9 5h2v2H9zM9 9h2v2H9zM5 5h2v2H5zM5 9h2v2H5zM1 9h2v2H1z" fill="#aca899" />
            </svg>
          </Corner>
        </Row>
      </ExampleBody>
    </ExampleFrame>
  );
}

/* ---------- taskbar ---------- */

const Taskbar = styled.footer`
  height: 30px;
  flex: none;
  display: flex;
  background: linear-gradient(#4a94f0 0, #2a66dc 4px, #245edb 20px, #1c4cb8 100%);
`;
const Start = styled.button`
  width: 97px;
  display: flex;
  align-items: center;
  gap: 4px;
  padding-left: 11px;
  border-radius: 0 8px 8px 0;
  color: #fff;
  font: italic bold 16px/20px ${caption};
  text-shadow: 1px 1px 1px #1c4a1c;
  background: linear-gradient(#5cac5c 0, #3c903c 5px, #389838 22px, #2c742c 100%);
  box-shadow: inset -3px 0 4px #2a6e2a;
`;
const Tasks = styled.div`
  flex: 1;
  min-width: 0;
  display: flex;
  gap: 2px;
  padding: 3px 15px 2px 10px;
`;
const Task = styled.button`
  flex: 1 1 0;
  min-width: 0;
  display: flex;
  align-items: center;
  gap: 3px;
  padding: 0 9px;
  border-radius: 3px;
  color: #fff;
  background: ${(p) => (p.$active ? "#1e52b7" : "linear-gradient(#5c98fc 0, #3c81f3 4px, #3c81f3 20px, #3474e0 100%)")};
  box-shadow: ${(p) => (p.$active ? "inset 1px 1px 1px #103880" : "inset -1px -1px #2c62cc")};
  span { white-space: nowrap; }
`;
const Tray = styled.div`
  position: relative;
  width: 110px;
  display: flex;
  align-items: center;
  gap: 2px;
  padding-left: 7px;
  color: #fff;
  border-left: 1px solid #1042af;
  background: linear-gradient(#18b8f4 0, #14a0ec 4px, #1290e8 22px, #0c78c8 100%);
  time { margin-left: 8px; white-space: nowrap; }
`;
const TrayToggle = styled.button`
  position: absolute;
  left: -10px;
  top: 6px;
  width: 18px;
  height: 18px;
  display: grid;
  place-items: center;
  border-radius: 9px;
  border: 1px solid #a8d4f8;
  background: #2484ec;
`;
const tasks = [
  { icon: <FoxIcon />, text: "Docutek ERes - Co..." },
  { icon: <GitIcon />, text: "MINGW32:~/My Do..." },
  { icon: <FolderIcon />, text: "2012-Physics-308L-..." },
  { icon: <ViIcon />, text: "Example buffered r..." },
  { icon: <ViIcon />, text: "Example buffered r..." },
  { icon: <ViIcon />, text: "spietro_frequency....", active: true },
  { icon: <ViIcon />, text: "spietro_frequency.vi" },
];

export default function App() {
  return (
    <Desktop>
      <GlobalStyle />
      <Browser>
        <BrowserTitle>
          <FoxIcon />
          <CaptionText>Docutek ERes - Courses - Mozilla Firefox</CaptionText>
          <CaptionButton aria-label="Minimize">
            <svg width="13" height="13" aria-hidden="true"><path d="M2 9h7v3H2z" fill="#fff" /></svg>
          </CaptionButton>
          <CaptionButton aria-label="Restore">
            <svg width="13" height="13" aria-hidden="true"><path d="M4.500 4V2.500h7v6H9M1.500 5.500h7v6h-7z" fill="none" stroke="#fff" strokeWidth="1.500" /></svg>
          </CaptionButton>
          <CaptionButton $close aria-label="Close">
            <svg width="13" height="13" aria-hidden="true"><path d="M2 2l9 9M11 2l-9 9" stroke="#fff" strokeWidth="2.200" /></svg>
          </CaptionButton>
        </BrowserTitle>
        <BrowserMenu>
          {["File", "Edit", "View", "History", "Bookmarks", "Tools", "Help"].map((m) => <MenuItem key={m}>{m}</MenuItem>)}
        </BrowserMenu>
        <Page />
        <StatusBar>Done</StatusBar>
      </Browser>
      <Taskbar>
        <Start><FlagIcon />start</Start>
        <Tasks>
          {tasks.map((t, i) => (
            <Task key={i} $active={t.active}>{t.icon}<span>{t.text}</span></Task>
          ))}
        </Tasks>
        <Tray>
          <TrayToggle aria-label="Show hidden icons"><Chevron turn={180} color="#fff" /></TrayToggle>
          <DriveIcon />
          <MuteIcon />
          <time>3:14 PM</time>
        </Tray>
      </Taskbar>
      <ExampleWindow />
      <FrontPanel />
      <BlockDiagram />
      <ToolsPalette />
    </Desktop>
  );
}
